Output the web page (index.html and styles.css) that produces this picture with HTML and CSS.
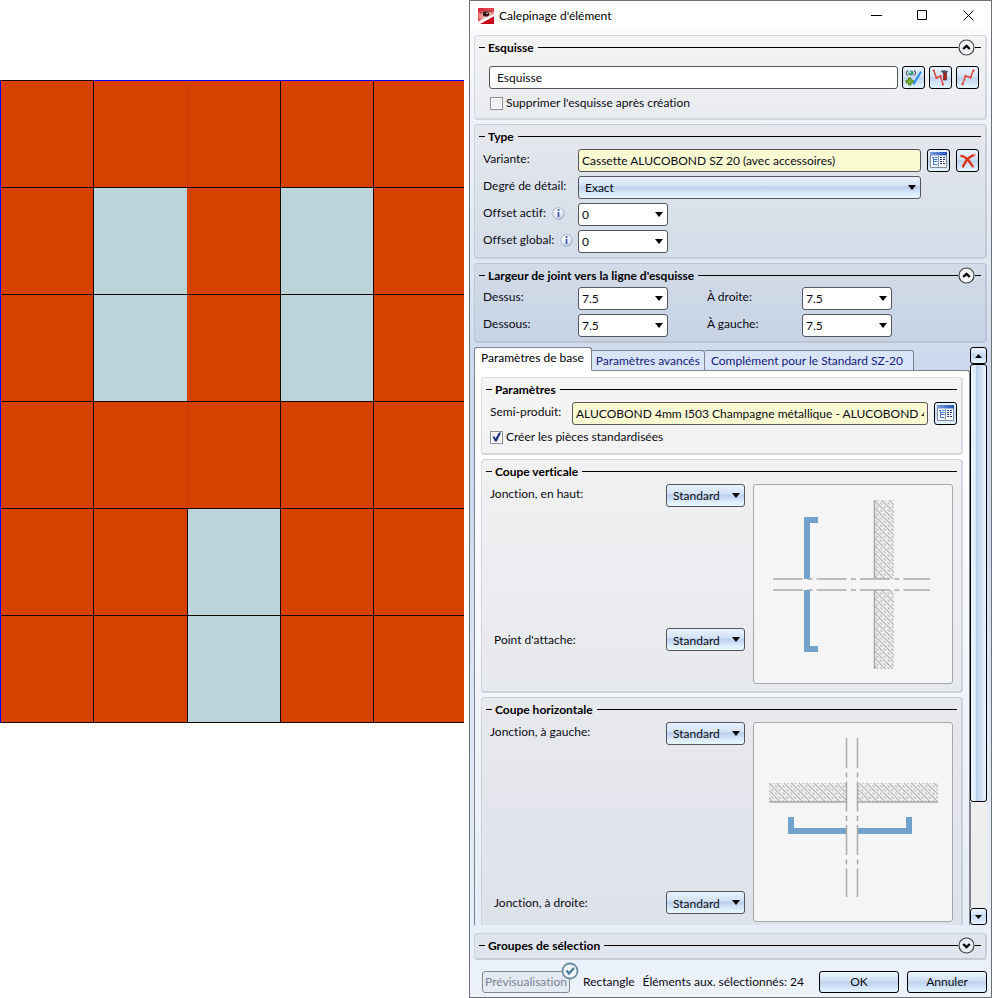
FILE: index.html
```html
<!DOCTYPE html>
<html lang="fr">
<head>
<meta charset="utf-8">
<title>Calepinage d'élément</title>
<link rel="stylesheet" href="styles.css">
</head>
<body>
<svg class="defs" aria-hidden="true">
  <defs>
    <linearGradient id="bluebar" x1="0" x2="1"><stop offset="0" stop-color="#7fa3e0"/><stop offset="1" stop-color="#2450b4"/></linearGradient>
    <linearGradient id="redtile" x1="0" y1="0" x2="1" y2="1"><stop offset="0" stop-color="#d8203a"/><stop offset=".45" stop-color="#e04a50"/><stop offset="1" stop-color="#c40d20"/></linearGradient>
    <linearGradient id="skin" x1="0" x2="1"><stop offset="0" stop-color="#e46a6c"/><stop offset=".5" stop-color="#f8cfc8"/><stop offset="1" stop-color="#e88880"/></linearGradient>
    <radialGradient id="pearl" cx=".4" cy=".3" r=".75"><stop offset="0" stop-color="#fff"/><stop offset=".6" stop-color="#e4eaf5"/><stop offset="1" stop-color="#9fb0cc"/></radialGradient>
    <pattern id="hatch" width="7.5" height="7.5" patternUnits="userSpaceOnUse">
      <path d="M-1-1 8.5 8.5M-1 6.5 1 8.5M6.5-1 8.5 1" stroke="#a0a0a0"/>
      <path d="M2.75-1 8.5 4.75M-1 2.75 4.75 8.5" stroke="#a8a8a8" stroke-dasharray="4 2"/>
    </pattern>
    <symbol id="i-book" viewBox="0 0 17 17">
      <path d="M.500.500h16v15H.500z" fill="#fff" stroke="#7d8fa8"/>
      <path d="M0 0h17v3.500H0z" fill="url(#bluebar)"/>
      <path d="M8.500 4v11" stroke="#8b9ab0"/>
      <path d="M2 5.500h2M3.500 5v8M3.500 7.500h4M3.500 9.500h4M3.500 12.500h4M5 5.500h2.500" fill="none" stroke="#3c78dc"/>
      <path d="M10 5.500h2M13 5.500h2M10 7.500h2M13 7.500h2M10 9.500h2M13 9.500h1M10 11.500h2M13 11.500h2" stroke="#1d3a70"/>
    </symbol>
    <symbol id="i-cross" viewBox="0 0 17 17">
      <path d="M2 4Q7 4 14 14.500M15.500 3Q9 4 4 14.500" fill="none" stroke="#e3a396" stroke-width="2.800" stroke-linecap="round"/>
      <path d="M2.500 4Q7 4 13.500 14M14 3.500Q9 4.500 4 14.500" fill="none" stroke="#d92a17" stroke-width="1.900" stroke-linecap="round"/>
    </symbol>
    <symbol id="i-info" viewBox="0 0 13 13">
      <circle cx="6.500" cy="6.500" r="5.900" fill="url(#pearl)" stroke="#aab6cc" stroke-width=".9"/>
      <path d="M6.500 5v5" fill="none" stroke="#3c59ae" stroke-width="1.800"/><circle cx="6.500" cy="3" r="1.100" fill="#3c59ae"/>
    </symbol>
    <symbol id="i-up" viewBox="0 0 17 17"><circle cx="8.500" cy="8.500" r="7.500" fill="#f2f4f7" stroke="#444" stroke-width="1.200"/><path d="M5.200 10 8.500 6.800 11.800 10" fill="none" stroke="#000" stroke-width="2.300"/></symbol>
    <symbol id="i-down" viewBox="0 0 17 17"><circle cx="8.500" cy="8.500" r="7.500" fill="#e8edf5" stroke="#444" stroke-width="1.200"/><path d="M5.200 7 8.500 10.200 11.800 7" fill="none" stroke="#000" stroke-width="2.300"/></symbol>
  </defs>
</svg>

<div class="workspace">
  <main class="model">
    <svg class="facade" viewBox="0 0 464 643" role="img" aria-label="Façade" shape-rendering="crispEdges">
      <path fill="#d64000" d="M0 0h464v643H0z"/>
      <path fill="#bcd4d9" d="M94 108h93v214H94zM281 108h93v214h-93zM188 429h93v214h-93z"/>
      <path stroke="#9b3000" opacity=".15" d="M187.500 1v107M187.500 322v107"/>
      <path stroke="#140800" fill="none" d="M0 107.500h464M0 214.500h464M0 321.500h464M0 428.500h464M0 535.500h464M0 642.500h464M93.500 0v643M280.500 0v643M373.500 0v643M187.500 428v215M0 .500h94"/>
      <path stroke="#00f" fill="none" d="M94 .500h370M.500 1v642"/>
    </svg>
  </main>

  <section class="dialog" aria-labelledby="dlg-title">
    <header class="titlebar">
      <svg class="appicon" viewBox="0 0 16 16" aria-hidden="true">
        <path fill="url(#redtile)" d="M0 0h16v16H0z"/>
        <path fill="url(#skin)" d="M0 5q7-4 16-1v3L4 12 0 10z"/>
        <path fill="#fff" d="M0 13.500 16 6v2.500L3 16H0z"/><path fill="#c8081c" d="M2 16 16 8.500V16z"/>
        <ellipse cx="8" cy="6" rx="3.200" ry="2.600" fill="#300f14"/><circle cx="9" cy="5.300" r=".8" fill="#fff"/>
        <path d="M2 5.500Q7 1.500 14 4" fill="none" stroke="#7c1f24"/>
      </svg>
      <h1 id="dlg-title">Calepinage d'élément</h1>
      <button class="win" aria-label="Réduire"><svg viewBox="0 0 11 11"><path d="M0 5.500h11"/></svg></button>
      <button class="win" aria-label="Agrandir"><svg viewBox="0 0 11 11"><path d="M.500.500h9v9h-9z"/></svg></button>
      <button class="win" aria-label="Fermer"><svg viewBox="0 0 11 11"><path d="m.500.500 10 10m0-10-10 10"/></svg></button>
    </header>

    <div class="body">
      <section class="group tone-a">
        <h2><span>Esquisse</span><button class="toggle" aria-label="Replier Esquisse"><svg><use href="#i-up"/></svg></button></h2>
        <div class="sketch">
          <input class="field wide" type="text" value="Esquisse" aria-label="Esquisse">
          <button class="tool" aria-label="Nouvelle esquisse"><svg viewBox="0 0 17 17">
            <path d="M3 1.500Q-.500 4 3 6.500M9 1.500Q12.500 4 9 6.500" fill="none" stroke="#555" stroke-width="1.100"/>
            <circle cx="6" cy="4" r="2.600" fill="#3c9880"/><circle cx="5.200" cy="3.200" r="1" fill="#bcecdc"/>
            <path d="M3.500 9h2.500v2.200h2.500v2.600H6V16H3.500v-2.200H1v-2.600h2.500z" fill="#7ab52b" stroke="#3c7010" stroke-width=".8"/>
            <path d="M15.500 3.500 9 14.500" stroke="#2b8eea" stroke-width="2.200" stroke-linecap="round"/></svg></button>
          <button class="tool" aria-label="Modifier l'esquisse"><svg viewBox="0 0 17 17">
            <path d="M1.500 1 4.500 9l4-2 2.500 8.500" fill="none" stroke="#e34b42" stroke-width="1.500"/>
            <g fill="#e8392e"><circle cx="1.800" cy="1.500" r="1.100"/><circle cx="4.500" cy="9" r="1.100"/><circle cx="8.500" cy="7.200" r="1.100"/><circle cx="10.800" cy="15.500" r="1.100"/></g>
            <path d="M8.500 2.500Q11 0 16.500 2.500L14.500 4H11z" fill="#525860"/><path d="M11.500 4h3v7h-3z" fill="#b01e18" stroke="#542020" stroke-width=".6"/></svg></button>
          <button class="tool" aria-label="Choisir une polyligne"><svg viewBox="0 0 17 17">
            <path d="M3.500 15.500 6.500 7l5 1.500 3-7.500" fill="none" stroke="#e34b42" stroke-width="1.500"/>
            <g fill="#e8392e"><circle cx="3.500" cy="15.200" r="1.100"/><circle cx="6.500" cy="7.200" r="1.100"/><circle cx="11.500" cy="8.500" r="1.100"/><circle cx="14.500" cy="1.600" r="1.100"/></g></svg></button>
        </div>
        <label class="check"><input type="checkbox">Supprimer l'esquisse après création</label>
      </section>

      <section class="group tone-b">
        <h2><span>Type</span></h2>
        <div class="form">
          <label for="variante">Variante:</label>
          <div class="line">
            <input id="variante" class="field pick" readonly value="Cassette ALUCOBOND SZ 20 (avec accessoires)">
            <button class="tool" aria-label="Catalogue"><svg><use href="#i-book"/></svg></button>
            <button class="tool" aria-label="Supprimer"><svg><use href="#i-cross"/></svg></button>
          </div>
          <label for="detail">Degré de détail:</label>
          <div class="combo glossy detail"><select id="detail"><option>Exact</option></select></div>
          <label for="offa">Offset actif: <svg class="info" aria-hidden="true"><use href="#i-info"/></svg></label>
          <div class="combo"><select id="offa"><option>0</option></select></div>
          <label for="offg">Offset global: <svg class="info" aria-hidden="true"><use href="#i-info"/></svg></label>
          <div class="combo"><select id="offg"><option>0</option></select></div>
        </div>
      </section>

      <section class="group tone-c">
        <h2><span>Largeur de joint vers la ligne d'esquisse</span><button class="toggle" aria-label="Replier Largeur de joint"><svg><use href="#i-up"/></svg></button></h2>
        <div class="form joints">
          <label for="j1">Dessus:</label><div class="combo"><select id="j1"><option>7.5</option></select></div>
          <label for="j2">À droite:</label><div class="combo"><select id="j2"><option>7.5</option></select></div>
          <label for="j3">Dessous:</label><div class="combo"><select id="j3"><option>7.5</option></select></div>
          <label for="j4">À gauche:</label><div class="combo"><select id="j4"><option>7.5</option></select></div>
        </div>
      </section>

      <div class="scroller">
        <div class="tabbed">
          <div class="tabs" role="tablist">
            <button class="tab active" role="tab" aria-selected="true">Paramètres de base</button>
            <button class="tab" role="tab" aria-selected="false">Paramètres avancés</button>
            <button class="tab last" role="tab" aria-selected="false">Complément pour le Standard SZ-20</button>
          </div>
          <div class="panel" role="tabpanel">
            <section class="group tone-p1">
              <h2><span>Paramètres</span></h2>
              <div class="line semi">
                <label for="semi">Semi-produit:</label>
                <input id="semi" class="field pick" readonly value="ALUCOBOND 4mm I503 Champagne métallique - ALUCOBOND 4mm">
                <button class="tool" aria-label="Catalogue"><svg><use href="#i-book"/></svg></button>
              </div>
              <label class="check"><input type="checkbox" checked>Créer les pièces standardisées</label>
            </section>

            <section class="group tone-p2">
              <h2><span>Coupe verticale</span></h2>
              <div class="cut">
                <div class="joins">
                  <div class="join"><label for="c1">Jonction, en haut:</label><div class="combo glossy"><select id="c1"><option>Standard</option></select></div></div>
                  <div class="join low mid"><label for="c2">Point d'attache:</label><div class="combo glossy"><select id="c2"><option>Standard</option></select></div></div>
                </div>
                <svg class="figure" viewBox="1 1 198 198" role="img" aria-label="Coupe verticale">
                  <path fill="url(#hatch)" d="M122 16h19v79h-19zM122 106h19v79h-19z"/>
                  <path stroke="#a8a8a8" stroke-width="1.500" d="M121.500 16v79M121.500 106v79"/>
                  <path fill="#72a1cb" d="M51 33h14v6h-8v56h-6zM51 106h6v56h8v6H51z"/>
                  <path stroke="#aaa" stroke-width="1.500" stroke-dasharray="30 4.500 5 4" d="M20 95h157M20 106h157"/>
                </svg>
              </div>
            </section>

            <section class="group tone-p3">
              <h2><span>Coupe horizontale</span></h2>
              <div class="cut">
                <div class="joins">
                  <div class="join"><label for="c3">Jonction, à gauche:</label><div class="combo glossy"><select id="c3"><option>Standard</option></select></div></div>
                  <div class="join low"><label for="c4">Jonction, à droite:</label><div class="combo glossy"><select id="c4"><option>Standard</option></select></div></div>
                </div>
                <svg class="figure" viewBox="1 1 198 198" role="img" aria-label="Coupe horizontale">
                  <path fill="url(#hatch)" d="M16 61h77v19H16zM105 61h80v19h-80z"/>
                  <path stroke="#a8a8a8" stroke-width="1.500" d="M16 80h77M105 80h80"/>
                  <path fill="#72a1cb" d="M35 95h6v11h52v6H35zM105 106h48V95h6v17h-54z"/>
                  <path stroke="#aaa" stroke-width="1.500" stroke-dasharray="30 4.500 5 4" d="M93.500 16v159M104.500 16v159"/>
                </svg>
              </div>
            </section>
          </div>
        </div>
        <div class="scrollbar">
          <button class="arrow" aria-label="Défiler vers le haut"><svg viewBox="0 0 7 4"><path d="M0 4 3.500 0 7 4z"/></svg></button>
          <div class="thumb"></div>
          <div class="track"></div>
          <button class="arrow" aria-label="Défiler vers le bas"><svg viewBox="0 0 7 4"><path d="M0 0h7L3.500 4z"/></svg></button>
        </div>
      </div>

      <section class="group tone-d">
        <h2><span>Groupes de sélection</span><button class="toggle" aria-label="Déplier Groupes de sélection"><svg><use href="#i-down"/></svg></button></h2>
      </section>
    </div>

    <footer class="footer">
      <button class="push preview" disabled>Prévisualisation
        <svg viewBox="0 0 18 18" aria-hidden="true"><circle cx="9" cy="9" r="7.500" fill="#eef4f8" stroke="#6f8ea3" stroke-width="1.800"/><path d="M5.500 8.500 8 11.500l5-5.500" fill="none" stroke="#4d7c99" stroke-width="2.200"/></svg>
      </button>
      <span>Rectangle</span>
      <span class="count">Éléments aux. sélectionnés: 24</span>
      <button class="push">OK</button>
      <button class="push">Annuler</button>
    </footer>
  </section>
</div>
</body>
</html>
```
FILE: styles.css
```css
* { box-sizing: border-box; }

body {
  margin: 0;
  background: #fff;
  color: #0b0b12;
  font: 12px/16px Lato, "Open Sans", sans-serif;
  font-variant-ligatures: none;
}

button, input, select { font: inherit; font-variant-ligatures: none; color: inherit; margin: 0; }
button { padding: 0; }
h1, h2 { margin: 0; font-size: 12px; line-height: 16px; }
svg { display: block; }
.defs { position: absolute; width: 0; height: 0; }

.workspace {
  display: grid;
  grid-template-columns: minmax(0, 464fr) minmax(0, 523fr);
  column-gap: 5px;
  height: 100vh;
}

.model { padding-top: 80px; overflow: hidden; }
.facade { width: 100%; }

/* Dialog window */
.dialog {
  display: flex;
  flex-direction: column;
  min-height: 0;
  height: 100vh;
  border: 1px solid #6f7074;
  background: linear-gradient(#fff 0, #f8fafd 4%, #eef2f9 12%, #dfe7f2 26%, #cddaed 36%, #cddaed 50%, #dce6f4 70%, #e6edf8 90%, #edf2fb 100%);
}

.titlebar {
  display: flex;
  align-items: center;
  height: 29px;
  padding-left: 8px;
  background: #fff;
}
.titlebar h1 { flex: 1; font-weight: 400; color: #000; }
.appicon { width: 16px; height: 16px; margin-right: 5px; }
.win {
  display: grid;
  place-items: center;
  width: 46px;
  height: 29px;
  border: 0;
  background: none;
}
.win svg { width: 11px; height: 11px; fill: none; stroke: #000; }

.body {
  display: flex;
  flex: 1;
  flex-direction: column;
  gap: 4px;
  min-height: 0;
  padding: 5px 4px 0;
}

/* Group boxes */
.group {
  flex: none;
  padding: 3px 4px 4px 8px;
  border: 1px solid rgba(150, 160, 175, .25);
  border-right: 2px solid rgba(150, 160, 175, .3);
  border-bottom: 2px solid rgba(150, 160, 175, .35);
  border-radius: 4px;
}
.tone-a { background: linear-gradient(#f4f4f4, #e8ebf0); }
.tone-b { background: linear-gradient(#e6e8ed, #d3dde8); }
.tone-c { background: linear-gradient(#d2dbe7, #c7d3e5); }
.tone-d { background: linear-gradient(#dee3ec, #e1e6ef); }
.tone-p1 { background: linear-gradient(#f5f5f5, #f2f2f3); }
.tone-p2 { background: linear-gradient(#f1f1f2, #e6e9ed); }
.tone-p3 { background: linear-gradient(#e8e9ed, #dde2ea); }

.group h2 {
  display: flex;
  align-items: center;
  height: 17px;
  margin-left: -4px;
  color: #000;
}
.group h2::before { content: ""; width: 6px; height: 1px; margin-right: 3px; background: #000; }
.group h2::after { content: ""; flex: 1; order: 1; height: 1px; margin-left: 4px; background: #000; }
.toggle {
  display: flex;
  align-items: center;
  order: 2;
  border: 0;
  background: none;
}
.toggle svg { width: 17px; height: 17px; }
.toggle::after { content: ""; width: 6px; height: 1px; background: #000; }

.line, .sketch { display: flex; gap: 6px; }
.sketch { gap: 4px; margin: 10px 2px 4px 6px; }

.field {
  flex: 1;
  min-width: 0;
  height: 23px;
  padding: 0 3px;
  border: 1px solid #55555a;
  border-radius: 3px;
  background: #fff;
}
.wide { padding: 0 7px; }
.pick { background: #fafad2; }

.tool {
  display: grid;
  place-items: center;
  flex: none;
  width: 23px;
  height: 23px;
  border: 1px solid #000;
  border-radius: 3px;
  background: linear-gradient(#e9f4ff, #d2e2f5 45%, #bfd3ef 50%, #e4f4ff);
}
.tool svg { width: 17px; height: 17px; }

.check { display: flex; align-items: center; height: 20px; padding-left: 7px; }
.tone-a .check { margin-bottom: 1px; }
.check input {
  appearance: none;
  width: 13px;
  height: 13px;
  margin-right: 3px;
  border: 1px solid #8e9094;
  background: #f0f0f0;
  box-shadow: inset 0 0 0 1px #fff;
}
.check input:checked::before {
  content: "";
  display: block;
  width: 11px;
  height: 11px;
  background: #1c2f7c;
  clip-path: polygon(14% 45%, 32% 45%, 42% 64%, 72% 8%, 92% 8%, 52% 92%, 36% 92%);
}

/* Label and control rows */
.form {
  display: grid;
  grid-template-columns: 95px minmax(0, 1fr);
  row-gap: 4px;
  margin-top: 4px;
}
.form label { display: flex; align-items: center; height: 20px; }
.form .line { padding-right: 2px; }
.joints { grid-template-columns: 95px 129px 95px 1fr; margin-top: 3px; }
.info { flex: none; width: 13px; height: 13px; margin-left: 6px; }

.combo { position: relative; width: 90px; height: 23px; }
.combo::after {
  content: "";
  position: absolute;
  top: 9px;
  right: 5px;
  width: 8px;
  height: 5px;
  background: #000;
  clip-path: polygon(0 0, 100% 0, 50% 100%);
  pointer-events: none;
}
.combo select {
  appearance: none;
  width: 100%;
  height: 23px;
  padding: 0 3px;
  border: 1px solid #55555a;
  border-radius: 3px;
  background: #fff;
}
.combo.glossy select {
  padding: 0 6px;
  background: linear-gradient(#e8f2fe, #d4e2f5 42%, #b9cfec 48%, #dcecfb 80%, #e6f6ff);
}
.detail { width: auto; margin-right: 60px; }

/* Tabs and scrolling panel */
.scroller { display: flex; flex: 1; min-height: 0; }
.tabbed { display: flex; flex: 1; flex-direction: column; min-width: 0; }
.tabs { display: flex; align-items: flex-end; height: 24px; flex: none; }
.tab {
  position: relative;
  height: 21px;
  padding: 0 4px;
  border: 1px solid #7d838c;
  border-left: 0;
  border-radius: 0 3px 0 0;
  background: #dae4f8;
  color: #14207a;
  white-space: nowrap;
}
.tab.last { padding: 0 10px 0 6px; }
.tab.active {
  height: 24px;
  padding: 0 7px 2px 6px;
  border-left: 1px solid #7d838c;
  border-bottom-color: #fff;
  border-radius: 3px 3px 0 0;
  background: #fff;
  color: #000;
}
.panel {
  display: flex;
  flex: 1;
  flex-direction: column;
  gap: 4px;
  min-height: 0;
  margin-top: -1px;
  padding: 6px 6px 0;
  overflow: hidden;
  border: 1px solid #7d838c;
  border-bottom: 0;
  border-radius: 0 3px 0 0;
  background: linear-gradient(#fff, #fbfcfe 25%, #f1f5fb 60%, #e6edf8);
}
.panel .group { padding: 3px 4px 7px 8px; }
.panel .tone-p1 { padding-bottom: 6px; }
.panel .check { margin-top: 2px; padding-left: 0; }
.semi { margin-top: 4px; }
.semi label { width: 76px; height: 20px; line-height: 20px; white-space: nowrap; }
.cut { display: flex; gap: 8px; margin: 4px 4px 0 0; }
.joins { display: flex; flex: 1; flex-direction: column; }
.join { display: flex; justify-content: space-between; line-height: 20px; }
.join .combo { width: 79px; }
.low { margin-top: auto; margin-bottom: 7px; padding-left: 4px; line-height: 24px; }
.low.mid { margin-bottom: 32px; }
.figure {
  flex: none;
  width: 200px;
  height: 200px;
  border: 1px solid #a5a7aa;
  border-radius: 3px;
  background: #f5f5f5;
}

.scrollbar { display: flex; flex-direction: column; width: 17px; flex: none; }
.arrow {
  display: grid;
  place-items: center;
  height: 17px;
  border: 1px solid #000;
  border-radius: 3px;
  background: linear-gradient(#eef7ff, #c6d8f0 50%, #e4f4ff);
}
.arrow svg { width: 7px; height: 4px; }
.thumb {
  flex: 438;
  border: 1px solid #000;
  border-radius: 3px;
  background: linear-gradient(90deg, #e6f5ff 10%, #dceafa 30%, #b9d0ec 36%, #cfe0f4 65%, #e8f7ff);
}
.track { flex: 106; border-left: 1px solid #858585; background: #eee; }

.tone-d { margin-top: 4px; }

/* Bottom actions */
.footer {
  display: flex;
  align-items: center;
  gap: 8px;
  padding: 11px 4px 4px 12px;
}
.footer span { white-space: nowrap; }
.push {
  position: relative;
  flex: none;
  width: 80px;
  height: 22px;
  border: 1px solid #000;
  border-radius: 3px;
  background: linear-gradient(#edf6ff, #d2e1f4 42%, #bdd2ed 50%, #e3f4ff);
}
.preview {
  width: 88px;
  margin-right: 5px;
  border-color: #85898e;
  background: #e3eaf4;
  color: #7b858f;
  white-space: nowrap;
}
.preview svg { position: absolute; top: -10px; right: -10px; width: 18px; height: 18px; }
.count { flex: 1; }
```
